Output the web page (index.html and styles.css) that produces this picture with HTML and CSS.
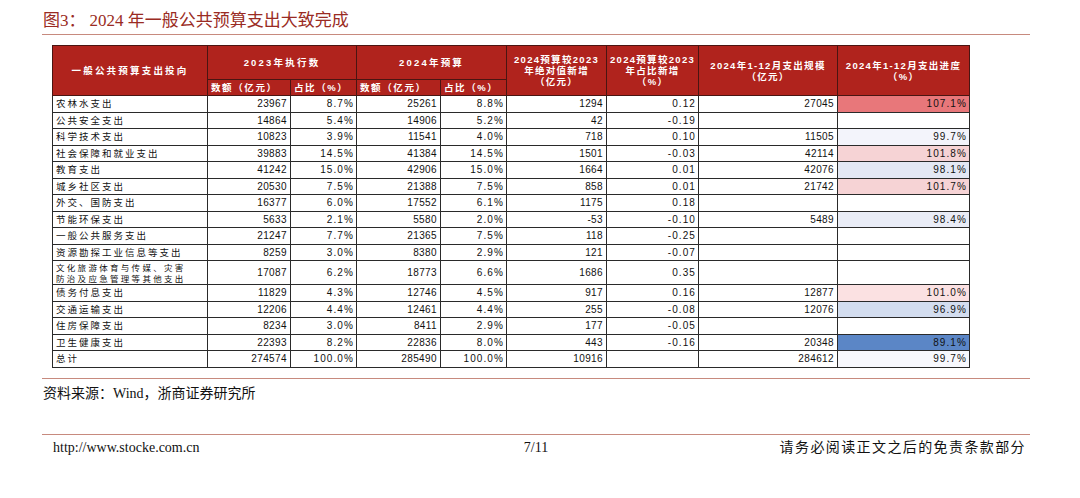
FILE: index.html
```html
<!DOCTYPE html>
<html lang="zh-CN">
<head>
<meta charset="utf-8">
<title>图3：2024 年一般公共预算支出大致完成</title>
<link rel="stylesheet" href="styles.css">
</head>
<body>
<div class="page">
  <div class="title">图3：<span class="title-gap"></span>2024 年一般公共预算支出大致完成</div>
  <table class="budget">
    <colgroup>
      <col class="c-name"><col class="c-n1"><col class="c-p1"><col class="c-n2"><col class="c-p2">
      <col class="c-abs"><col class="c-pct"><col class="c-scale"><col class="c-prog">
    </colgroup>
    <thead>
      <tr class="h1">
        <th rowspan="2">一般公共预算支出投向</th>
        <th colspan="2">2023年执行数</th>
        <th colspan="2">2024年预算</th>
        <th rowspan="2" class="multi">2024预算较2023<br>年绝对值新增<br>（亿元）</th>
        <th rowspan="2" class="multi">2024预算较2023<br>年占比新增<br>（%）</th>
        <th rowspan="2" class="multi">2024年1-12月支出规模<br>（亿元）</th>
        <th rowspan="2" class="multi">2024年1-12月支出进度<br>（%）</th>
      </tr>
      <tr class="h2">
        <th class="sub">数额（亿元）</th><th class="sub">占比（%）</th>
        <th class="sub">数额（亿元）</th><th class="sub">占比（%）</th>
      </tr>
    </thead>
    <tbody>
      <tr><td class="name">农林水支出</td><td>23967</td><td class="dec">8.7%</td><td>25261</td><td class="dec">8.8%</td><td>1294</td><td class="dec">0.12</td><td>27045</td><td class="dec p-red">107.1%</td></tr>
      <tr><td class="name">公共安全支出</td><td>14864</td><td class="dec">5.4%</td><td>14906</td><td class="dec">5.2%</td><td>42</td><td class="dec">-0.19</td><td></td><td></td></tr>
      <tr><td class="name">科学技术支出</td><td>10823</td><td class="dec">3.9%</td><td>11541</td><td class="dec">4.0%</td><td>718</td><td class="dec">0.10</td><td>11505</td><td class="dec p-b1">99.7%</td></tr>
      <tr><td class="name">社会保障和就业支出</td><td>39883</td><td class="dec">14.5%</td><td>41384</td><td class="dec">14.5%</td><td>1501</td><td class="dec">-0.03</td><td>42114</td><td class="dec p-pink">101.8%</td></tr>
      <tr><td class="name">教育支出</td><td>41242</td><td class="dec">15.0%</td><td>42906</td><td class="dec">15.0%</td><td>1664</td><td class="dec">0.01</td><td>42076</td><td class="dec p-b2">98.1%</td></tr>
      <tr><td class="name">城乡社区支出</td><td>20530</td><td class="dec">7.5%</td><td>21388</td><td class="dec">7.5%</td><td>858</td><td class="dec">0.01</td><td>21742</td><td class="dec p-pink">101.7%</td></tr>
      <tr><td class="name">外交、国防支出</td><td>16377</td><td class="dec">6.0%</td><td>17552</td><td class="dec">6.1%</td><td>1175</td><td class="dec">0.18</td><td></td><td></td></tr>
      <tr><td class="name">节能环保支出</td><td>5633</td><td class="dec">2.1%</td><td>5580</td><td class="dec">2.0%</td><td>-53</td><td class="dec">-0.10</td><td>5489</td><td class="dec p-b3">98.4%</td></tr>
      <tr><td class="name">一般公共服务支出</td><td>21247</td><td class="dec">7.7%</td><td>21365</td><td class="dec">7.5%</td><td>118</td><td class="dec">-0.25</td><td></td><td></td></tr>
      <tr><td class="name">资源勘探工业信息等支出</td><td>8259</td><td class="dec">3.0%</td><td>8380</td><td class="dec">2.9%</td><td>121</td><td class="dec">-0.07</td><td></td><td></td></tr>
      <tr class="tall"><td class="name two"><span class="line">文化旅游体育与传媒、灾害</span><span class="line">防治及应急管理等其他支出</span></td><td>17087</td><td class="dec">6.2%</td><td>18773</td><td class="dec">6.6%</td><td>1686</td><td class="dec">0.35</td><td></td><td></td></tr>
      <tr><td class="name">债务付息支出</td><td>11829</td><td class="dec">4.3%</td><td>12746</td><td class="dec">4.5%</td><td>917</td><td class="dec">0.16</td><td>12877</td><td class="dec p-pink2">101.0%</td></tr>
      <tr><td class="name">交通运输支出</td><td>12206</td><td class="dec">4.4%</td><td>12461</td><td class="dec">4.4%</td><td>255</td><td class="dec">-0.08</td><td>12076</td><td class="dec p-b4">96.9%</td></tr>
      <tr><td class="name">住房保障支出</td><td>8234</td><td class="dec">3.0%</td><td>8411</td><td class="dec">2.9%</td><td>177</td><td class="dec">-0.05</td><td></td><td></td></tr>
      <tr><td class="name">卫生健康支出</td><td>22393</td><td class="dec">8.2%</td><td>22836</td><td class="dec">8.0%</td><td>443</td><td class="dec">-0.16</td><td>20348</td><td class="dec p-blue">89.1%</td></tr>
      <tr><td class="name">总计</td><td>274574</td><td class="dec">100.0%</td><td>285490</td><td class="dec">100.0%</td><td>10916</td><td class="dec"></td><td>284612</td><td class="dec p-b0">99.7%</td></tr>
    </tbody>
  </table>
  <div class="source">资料来源：Wind，浙商证券研究所</div>
  <div class="footer">
    <span class="url">http://www.stocke.com.cn</span>
    <span class="pageno">7/11</span>
    <span class="disclaimer">请务必阅读正文之后的免责条款部分</span>
  </div>
</div>
</body>
</html>
```

FILE: styles.css
```css
html, body {
  margin: 0;
  padding: 0;
  background: #ffffff;
}

.page {
  width: 988px;
  margin-left: 42px;
  padding-top: 10px;
  font-family: "Liberation Serif", "Noto Sans CJK SC", serif;
  color: #111;
}

.title {
  font-size: 17px;
  line-height: 22px;
  height: 24px;
  color: #9a2b23;
  border-bottom: 1.5px solid #c78a7e;
  padding-left: 1px;
  white-space: nowrap;
}

.title-gap {
  display: inline-block;
  width: 4px;
}

.budget {
  margin-top: 10px;
  margin-left: 10px;
  width: 917px;
  table-layout: fixed;
  border-collapse: collapse;
  border: 1.5px solid #6b6b6b;
  font-family: "Liberation Sans", "Noto Sans CJK SC", sans-serif;
  font-size: 10px;
  color: #111;
}

.c-name { width: 155px; }
.c-n1 { width: 83px; }
.c-p1 { width: 66px; }
.c-n2 { width: 84px; }
.c-p2 { width: 66px; }
.c-abs { width: 100px; }
.c-pct { width: 92px; }
.c-scale { width: 139px; }
.c-prog { width: 132px; }

.budget th {
  background: #b0231d;
  color: #ffffff;
  font-weight: bold;
  font-size: 9.5px;
  letter-spacing: 2.2px;
  border: 1px solid #4a1512;
  padding: 0;
  text-align: center;
  white-space: nowrap;
  line-height: 11px;
}

.budget .h1 { height: 34px; }
.budget .h2 { height: 16px; }

.budget th.multi {
  letter-spacing: 1.3px;
  line-height: 11px;
}

.budget th.sub {
  text-align: left;
  padding-left: 3px;
  letter-spacing: 1.6px;
}

.budget tbody tr { height: 16.5px; }
.budget tbody tr.tall { height: 24px; }

.budget td {
  border: 1px solid #2a2a2a;
  padding: 0 3px 0 3px;
  text-align: right;
  white-space: nowrap;
  line-height: 11px;
  letter-spacing: 0.4px;
}

.budget td.dec {
  letter-spacing: 1.1px;
  padding-right: 2px;
}

.budget td.name {
  text-align: left;
  font-family: "Noto Sans CJK SC", sans-serif;
  font-size: 9.5px;
  letter-spacing: 2px;
  padding-left: 3px;
}

.budget td.two {
  font-size: 8.5px;
  letter-spacing: 2.3px;
  padding-top: 0;
  padding-bottom: 0;
}

.budget td.two .line {
  display: block;
  height: 11px;
  line-height: 11px;
}

.p-red { background: #e8777a; }
.p-pink { background: #f6d3d5; }
.p-pink2 { background: #fbe1e2; }
.p-b0 { background: #f7f8fd; }
.p-b1 { background: #f3f4fb; }
.p-b2 { background: #e3e8f4; }
.p-b3 { background: #e9ecf6; }
.p-b4 { background: #d3ddef; }
.p-blue { background: #5b86c6; }

.source {
  margin-top: 10px;
  border-top: 1.5px solid #c78a7e;
  padding-top: 6px;
  font-size: 14px;
  line-height: 18px;
  height: 49px;
  padding-left: 1px;
}

.footer {
  border-top: 1.5px solid #c78a7e;
  display: grid;
  grid-template-columns: 1fr auto 1fr;
  align-items: center;
  font-size: 14px;
  line-height: 18px;
  padding-top: 4px;
}

.url {
  padding-left: 11px;
}

.pageno {
  text-align: center;
}

.disclaimer {
  text-align: right;
  padding-right: 4px;
  letter-spacing: 1.4px;
}
```
